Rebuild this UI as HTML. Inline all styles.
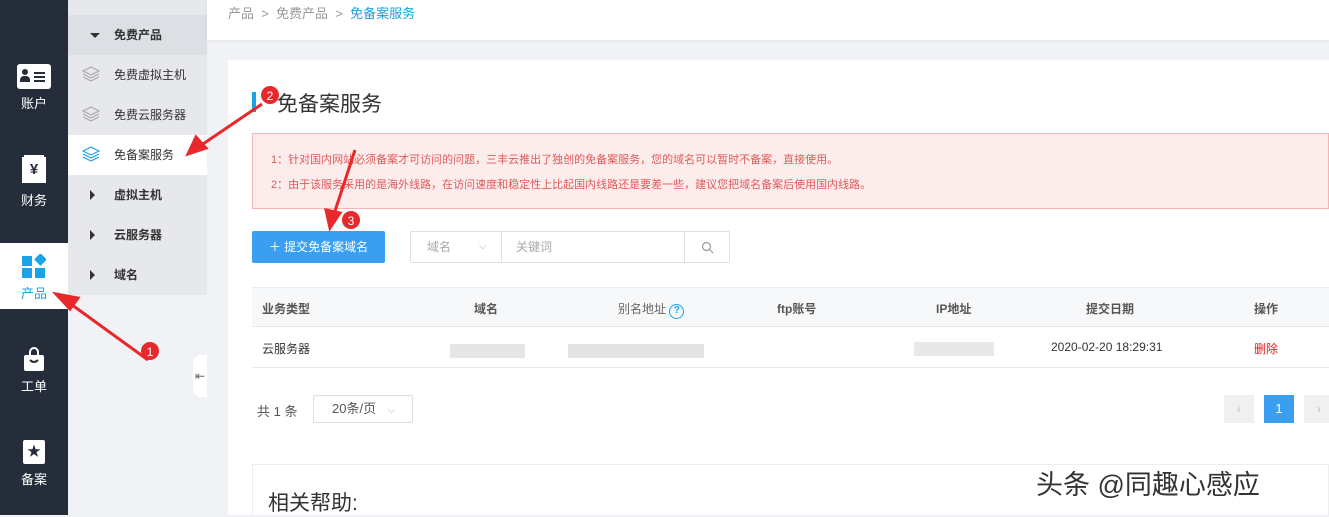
<!DOCTYPE html><html><head><meta charset="utf-8"><style>
*{margin:0;padding:0;box-sizing:border-box}
body{width:1329px;height:515px;overflow:hidden;background:#f1f2f5;font-family:"Liberation Sans","Noto Sans CJK SC",sans-serif;font-size:12px;color:#333;position:relative}
.a{position:absolute}
.side{left:0;top:0;width:68px;height:515px;background:#252d3a}
.si{position:absolute;left:0;width:68px;text-align:center;color:#fff;font-size:13px}
.menu{left:68px;top:0;width:139px;height:295px;background:#e6e8ec}
.mi{position:absolute;left:0;width:139px;height:40px;line-height:40px;padding-left:46px;font-size:12px;color:#333}
.tri{position:absolute;left:22px;top:17px;width:0;height:0}
.ly{position:absolute;left:14px;top:10px}
</style></head><body>
<div class="a side">
 <div class="si" style="top:64px"><div style="margin:0 auto;width:34px;height:25px;background:#fff;border-radius:3px;position:relative"><div class="a" style="left:5px;top:5px;width:6px;height:6px;border-radius:50%;background:#252d3a"></div><div class="a" style="left:3px;top:12px;width:10px;height:6px;border-radius:4px 4px 0 0;background:#252d3a"></div><div class="a" style="left:17px;top:8px;width:11px;height:2px;background:#252d3a;box-shadow:0 4px #252d3a,0 8px #252d3a"></div></div><div style="margin-top:4px">账户</div></div>
 <div class="si" style="top:157px"><div style="margin:0 auto;width:24px;height:26px;background:#fff;color:#252d3a;font-weight:bold;font-size:15px;line-height:26px;box-shadow:0 -4px 0 -2px #fff">¥</div><div style="margin-top:7px">财务</div></div>
 <div class="a" style="left:0;top:243px;width:68px;height:66px;background:#fff"></div>
 <div class="si" style="top:254px;color:#1aa3e8"><svg width="24" height="24"><rect x="0" y="2" width="10" height="10" fill="#1aa3e8"/><rect x="14" y="1" width="9" height="9" fill="#1aa3e8" transform="rotate(45 18.5 5.5)"/><rect x="0" y="14" width="10" height="10" fill="#1aa3e8"/><rect x="13" y="14" width="10" height="10" fill="#1aa3e8"/></svg><div style="margin-top:2px">产品</div></div>
 <div class="si" style="top:347px"><svg width="24" height="26"><path d="M8 8V5a4 4 0 0 1 8 0v3" stroke="#fff" stroke-width="2" fill="none"/><rect x="2" y="8" width="20" height="16" rx="2" fill="#fff"/><path d="M8 13q4 4 8 0" stroke="#252d3a" stroke-width="2" fill="none"/></svg><div>工单</div></div>
 <div class="si" style="top:440px"><div style="margin:0 auto;width:22px;height:24px;background:#fff;border-radius:2px;color:#252d3a;font-size:14px;line-height:22px">★</div><div style="margin-top:5px">备案</div></div>
</div>
<div class="a menu">
 <div class="mi" style="top:15px;background:#dcdfe4;font-weight:bold"><span class="tri" style="border-left:5px solid transparent;border-right:5px solid transparent;border-top:5px solid #333;top:18px"></span>免费产品</div>
 <div class="mi" style="top:55px"><svg class="ly" width="18" height="18"><g fill="none" stroke="#aaa" stroke-width="1.2"><path d="M9 2L17 6 9 10 1 6Z"/><path d="M1 9L9 13 17 9"/><path d="M1 12L9 16 17 12"/></g></svg>免费虚拟主机</div>
 <div class="mi" style="top:95px"><svg class="ly" width="18" height="18"><g fill="none" stroke="#aaa" stroke-width="1.2"><path d="M9 2L17 6 9 10 1 6Z"/><path d="M1 9L9 13 17 9"/><path d="M1 12L9 16 17 12"/></g></svg>免费云服务器</div>
 <div class="mi" style="top:135px;background:#fff"><svg class="ly" width="18" height="18"><g fill="none" stroke="#1aa3e8" stroke-width="1.2"><path d="M9 2L17 6 9 10 1 6Z"/><path d="M1 9L9 13 17 9"/><path d="M1 12L9 16 17 12"/></g></svg>免备案服务</div>
 <div class="mi" style="top:175px;font-weight:bold"><span class="tri" style="border-top:5px solid transparent;border-bottom:5px solid transparent;border-left:5px solid #333;top:15px"></span>虚拟主机</div>
 <div class="mi" style="top:215px;font-weight:bold"><span class="tri" style="border-top:5px solid transparent;border-bottom:5px solid transparent;border-left:5px solid #333;top:15px"></span>云服务器</div>
 <div class="mi" style="top:255px;font-weight:bold"><span class="tri" style="border-top:5px solid transparent;border-bottom:5px solid transparent;border-left:5px solid #333;top:15px"></span>域名</div>
</div>
<div class="a" style="left:193px;top:355px;width:14px;height:42px;background:#fff;border-radius:8px 0 0 8px;color:#666;font-size:12px;line-height:42px;text-align:center">⇤</div>
<div class="a" style="left:207px;top:0;width:1122px;height:40px;background:#fff;box-shadow:0 1px 3px rgba(0,0,0,.06);padding-left:21px;line-height:28px;font-size:13px;color:#999">产品 &nbsp;&gt;&nbsp; 免费产品 &nbsp;&gt;&nbsp; <span style="color:#1a9fe0">免备案服务</span></div>
<div class="a" style="left:228px;top:60px;width:1101px;height:455px;background:#fff"></div>
<div class="a" style="left:252px;top:92px;width:4px;height:20px;background:#1aa3e8"></div>
<div class="a" style="left:277px;top:88px;font-size:21px;color:#333">免备案服务</div>
<div class="a" style="left:252px;top:133px;width:1077px;height:76px;background:#fdecec;border:1px solid #f5b5b5;color:#e05a5a;font-size:11px;padding:14px 0 0 18px;line-height:25px">1：针对国内网站必须备案才可访问的问题，三丰云推出了独创的免备案服务，您的域名可以暂时不备案，直接使用。<br>2：由于该服务采用的是海外线路，在访问速度和稳定性上比起国内线路还是要差一些，建议您把域名备案后使用国内线路。</div>
<div class="a" style="left:252px;top:231px;width:133px;height:32px;background:#3a9ff0;border-radius:2px;color:#fff;font-size:12px;line-height:32px;text-align:center">＋ 提交免备案域名</div>
<div class="a" style="left:410px;top:231px;width:320px;height:32px;border:1px solid #dcdfe6;border-radius:2px;color:#aaa;line-height:30px">
 <span class="a" style="left:16px">域名</span><span class="a" style="left:68px;font-size:10px">⌵</span>
 <div class="a" style="left:90px;top:0;width:184px;height:30px;border-left:1px solid #dcdfe6;border-right:1px solid #dcdfe6;padding-left:14px">关键词</div>
 <svg class="a" style="left:290px;top:9px" width="13" height="13"><circle cx="5.5" cy="5.5" r="4" fill="none" stroke="#999" stroke-width="1.2"/><line x1="8.5" y1="8.5" x2="12" y2="12" stroke="#999" stroke-width="1.2"/></svg></div>
<div class="a" style="left:252px;top:287px;width:1077px;height:40px;background:#f7f8fa;border-top:1px solid #eee;border-bottom:1px solid #e8e8e8"></div>
<div class="a" style="left:252px;top:367px;width:1077px;height:1px;background:#e8e8e8"></div>
<div class="a" style="top:300px;left:262px;font-weight:bold;color:#555">业务类型</div>
<div class="a" style="top:300px;left:474px;font-weight:bold;color:#555">域名</div>
<div class="a" style="top:300px;left:618px;color:#666">别名地址 <span style="display:inline-block;width:15px;height:15px;border:1.5px solid #1aa3e8;border-radius:50%;color:#1aa3e8;font-size:10px;text-align:center;line-height:12px;font-weight:bold">?</span></div>
<div class="a" style="top:300px;left:777px;font-weight:bold;color:#555">ftp账号</div>
<div class="a" style="top:300px;left:936px;font-weight:bold;color:#555">IP地址</div>
<div class="a" style="top:300px;left:1086px;font-weight:bold;color:#555">提交日期</div>
<div class="a" style="top:300px;left:1254px;font-weight:bold;color:#555">操作</div>
<div class="a" style="top:340px;left:262px">云服务器</div>
<div class="a" style="top:344px;left:450px;width:75px;height:14px;background:#e6e6e6"></div>
<div class="a" style="top:344px;left:568px;width:136px;height:14px;background:#e4e4e4"></div>
<div class="a" style="top:342px;left:914px;width:80px;height:14px;background:#e8e8e8"></div>
<div class="a" style="top:340px;left:1051px">2020-02-20 18:29:31</div>
<div class="a" style="top:340px;left:1254px;color:#e02020">删除</div>
<div class="a" style="top:401px;left:257px;color:#555;font-size:13px">共 1 条</div>
<div class="a" style="top:395px;left:313px;width:100px;height:28px;border:1px solid #dcdfe6;border-radius:2px;color:#555;font-size:13px;line-height:26px;padding-left:18px">20条/页 <span style="color:#bbb;font-size:10px;margin-left:8px">⌵</span></div>
<div class="a" style="top:395px;left:1224px;width:30px;height:28px;background:#f0f0f0;color:#bbb;text-align:center;line-height:28px">‹</div>
<div class="a" style="top:395px;left:1264px;width:30px;height:28px;background:#3a9ff0;color:#fff;text-align:center;line-height:28px;font-size:13px">1</div>
<div class="a" style="top:395px;left:1304px;width:30px;height:28px;background:#f0f0f0;color:#bbb;text-align:center;line-height:28px">›</div>
<div class="a" style="top:464px;left:252px;width:1077px;height:51px;border:1px solid #eee;border-bottom:none"></div>
<div class="a" style="top:487px;left:268px;font-size:21px;color:#333">相关帮助:</div>
<div class="a" style="top:463px;left:1036px;font-size:27px;color:#333;text-shadow:0 0 2px #fff,0 0 2px #fff">头条 @同趣心感应</div>
<svg class="a" style="left:0;top:0" width="1329" height="515">
<g stroke="#e8282b" stroke-width="3" fill="#e8282b">
<line x1="148" y1="360" x2="68" y2="302"/><polygon points="56,294 78,298 70,309" />
<line x1="262" y1="104" x2="200" y2="146"/><polygon points="188,154 196,137 206,148"/>
<line x1="355" y1="150" x2="334" y2="214"/><polygon points="330,228 326,210 340,213"/>
</g>
<g fill="#e8282b"><circle cx="150" cy="351" r="9"/><circle cx="270" cy="95" r="9"/><circle cx="351" cy="220" r="9"/></g>
<g fill="#fff" font-size="12" font-family="Liberation Sans" text-anchor="middle"><text x="150" y="356">1</text><text x="270" y="100">2</text><text x="351" y="225">3</text></g>
</svg>
</body></html>
